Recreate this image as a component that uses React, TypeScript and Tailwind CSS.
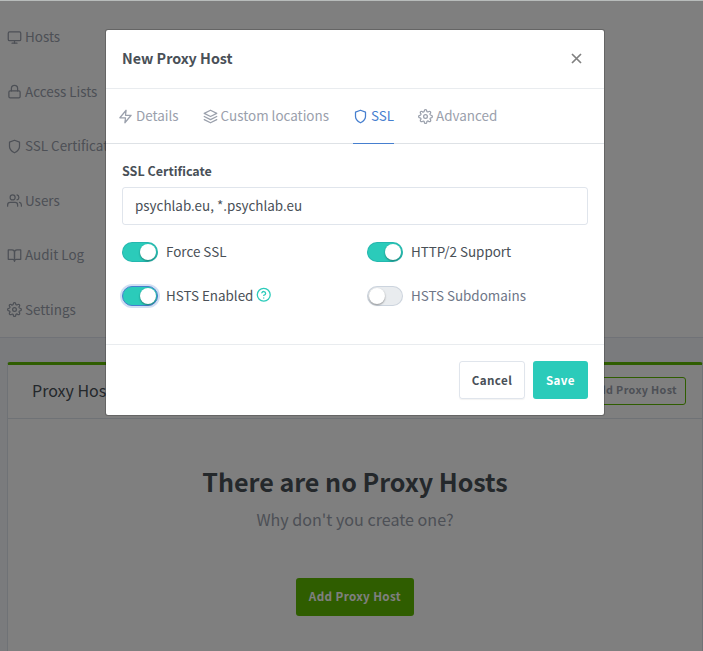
import type { ReactNode } from 'react';
import { FiBookOpen, FiHelpCircle, FiLayers, FiLock, FiMonitor, FiSettings, FiShield, FiUsers, FiZap } from 'react-icons/fi';

const nav: { icon: ReactNode; label: string }[] = [
  { icon: <FiMonitor size={15} />, label: 'Hosts' },
  { icon: <FiLock size={15} />, label: 'Access Lists' },
  { icon: <FiShield size={15} />, label: 'SSL Certificates' },
  { icon: <FiUsers size={15} />, label: 'Users' },
  { icon: <FiBookOpen size={15} />, label: 'Audit Log' },
  { icon: <FiSettings size={15} />, label: 'Settings' },
];

function Tab({ icon, label, active = false }: { icon: ReactNode; label: string; active?: boolean }) {
  return (
    <div className={`flex h-[55px] items-center gap-[3px] ${active ? 'border-b border-[#467fcf] text-[#467fcf]' : 'border-b border-transparent text-[#9aa0ac]'}`}>
      {icon}
      <span className="pb-0.5 text-[13.43px] leading-6">{label}</span>
    </div>
  );
}

function Toggle({ label, on = false, focus = false, children }: { label: string; on?: boolean; focus?: boolean; children?: ReactNode }) {
  return (
    <div className="flex h-5 items-center">
      <span
        className={`flex h-5 w-9 shrink-0 items-center rounded-full border px-px ${
          on ? 'justify-end bg-[#2bcbba]' : 'justify-start bg-[#e9ecef]'
        } ${focus ? 'border-[#467fcf] shadow-[0_0_0_2px_rgba(70,127,207,0.25)]' : 'border-[rgba(0,40,100,0.12)]'}`}
      >
        <span className="h-4 w-4 rounded-full bg-white shadow-[0_1px_2px_rgba(0,0,0,0.4)]" />
      </span>
      <span className={`ml-2 pb-0.5 text-[13.43px] leading-5 ${on ? 'text-[#495057]' : 'text-[#6e7687]'}`}>{label}</span>
      {children}
    </div>
  );
}

export default function App() {
  return (
    <div className="relative h-[651px] w-[703px] overflow-hidden bg-[#f5f7fb] font-['Noto_Sans_CJK_SC',sans-serif] text-[#495057]">
      <div className="h-[338px] border-b border-[#e0e5ee] bg-white pt-[10px] pl-[7px]">
        {nav.map((n) => (
          <div key={n.label} className="flex h-[54.5px] items-center gap-[3px] text-[#9aa0ac]">
            {n.icon}
            <span className="pb-0.5 text-[13.43px] leading-6 whitespace-nowrap">{n.label}</span>
          </div>
        ))}
      </div>
      <div className="mt-6 ml-[7px] h-[300px] w-[696px] rounded-t-[3px] border border-t-[3px] border-[#dfe4ed] border-t-[#5eba00] bg-white">
        <div className="flex h-[54px] items-center justify-between border-b border-[#dfe4ed] pr-4 pb-0.5 pl-6">
          <span className="pb-0.5 text-[16px] leading-6">Proxy Hosts</span>
          <span className="flex h-7 items-center rounded-[3px] border border-[#5eba00] px-2 text-[10.75px] font-bold tracking-[0.38px] text-[#9aa0ac]">
            Add Proxy Host
          </span>
        </div>
        <div className="flex flex-col items-center pt-11">
          <div className="text-[25.07px] leading-9 font-bold">There are no Proxy Hosts</div>
          <div className="mt-2 text-[16.1px] leading-6 text-[#9aa0ac]">Why don't you create one?</div>
          <div className="mt-[47px] flex h-[38px] w-[118px] items-center justify-center rounded-[3px] bg-[#5eba00] pb-0.5 text-[11.64px] font-bold tracking-[0.39px] text-white">
            Add Proxy Host
          </div>
        </div>
      </div>

      <div className="absolute inset-0 border-t border-[#b8bcbb] bg-black/50" />

      <div className="absolute top-[29px] left-[105px] w-[500px] rounded-[3px] border border-black/20 bg-white bg-clip-padding">
        <div className="flex h-[59px] items-center justify-between border-b border-[#e9ecef] pr-[22px] pb-0.5 pl-4">
          <span className="text-[14.32px] leading-6 font-bold">New Proxy Host</span>
          <svg width="11" height="11" viewBox="0 0 11 11" fill="none" stroke="#808080" strokeWidth="1.7">
            <path d="M1 1l9 9M10 1l-9 9" />
          </svg>
        </div>
        <div className="flex h-[55px] gap-6 border-b border-[#dee2e6] pl-3">
          <Tab icon={<FiZap size={15} />} label="Details" />
          <Tab icon={<FiLayers size={15} />} label="Custom locations" />
          <Tab icon={<FiShield size={15} />} label="SSL" active />
          <Tab icon={<FiSettings size={15} />} label="Advanced" />
        </div>
        <div className="h-[200px] px-4 pt-[17px]">
          <div className="text-[12.53px] leading-5 font-bold">SSL Certificate</div>
          <div className="mt-[6px] flex h-[38px] items-center rounded-[3px] border border-[rgba(0,40,100,0.12)] px-3 pb-0.5 text-[13.43px]">
            psychlab.eu, *.psychlab.eu
          </div>
          <div className="mt-[17px] grid grid-cols-[245px_1fr] gap-y-6">
            <Toggle label="Force SSL" on />
            <Toggle label="HTTP/2 Support" on />
            <Toggle label="HSTS Enabled" on focus>
              <FiHelpCircle size={15.5} className="mb-0.5 ml-[3px] text-[#2bcbba]" />
            </Toggle>
            <Toggle label="HSTS Subdomains" />
          </div>
        </div>
        <div className="flex h-[71px] items-center justify-end gap-2 border-t border-[#e9ecef] px-4">
          <div className="flex h-[38px] w-[66px] items-center justify-center rounded-[3px] border border-[rgba(0,40,100,0.12)] text-[11.64px] font-bold tracking-[0.39px] shadow-[0_1px_1px_rgba(0,0,0,0.05)]">
            Cancel
          </div>
          <div className="flex h-[38px] w-[55px] items-center justify-center rounded-[3px] bg-[#2bcbba] text-[11.64px] font-bold tracking-[0.39px] text-white">
            Save
          </div>
        </div>
      </div>
    </div>
  );
}
